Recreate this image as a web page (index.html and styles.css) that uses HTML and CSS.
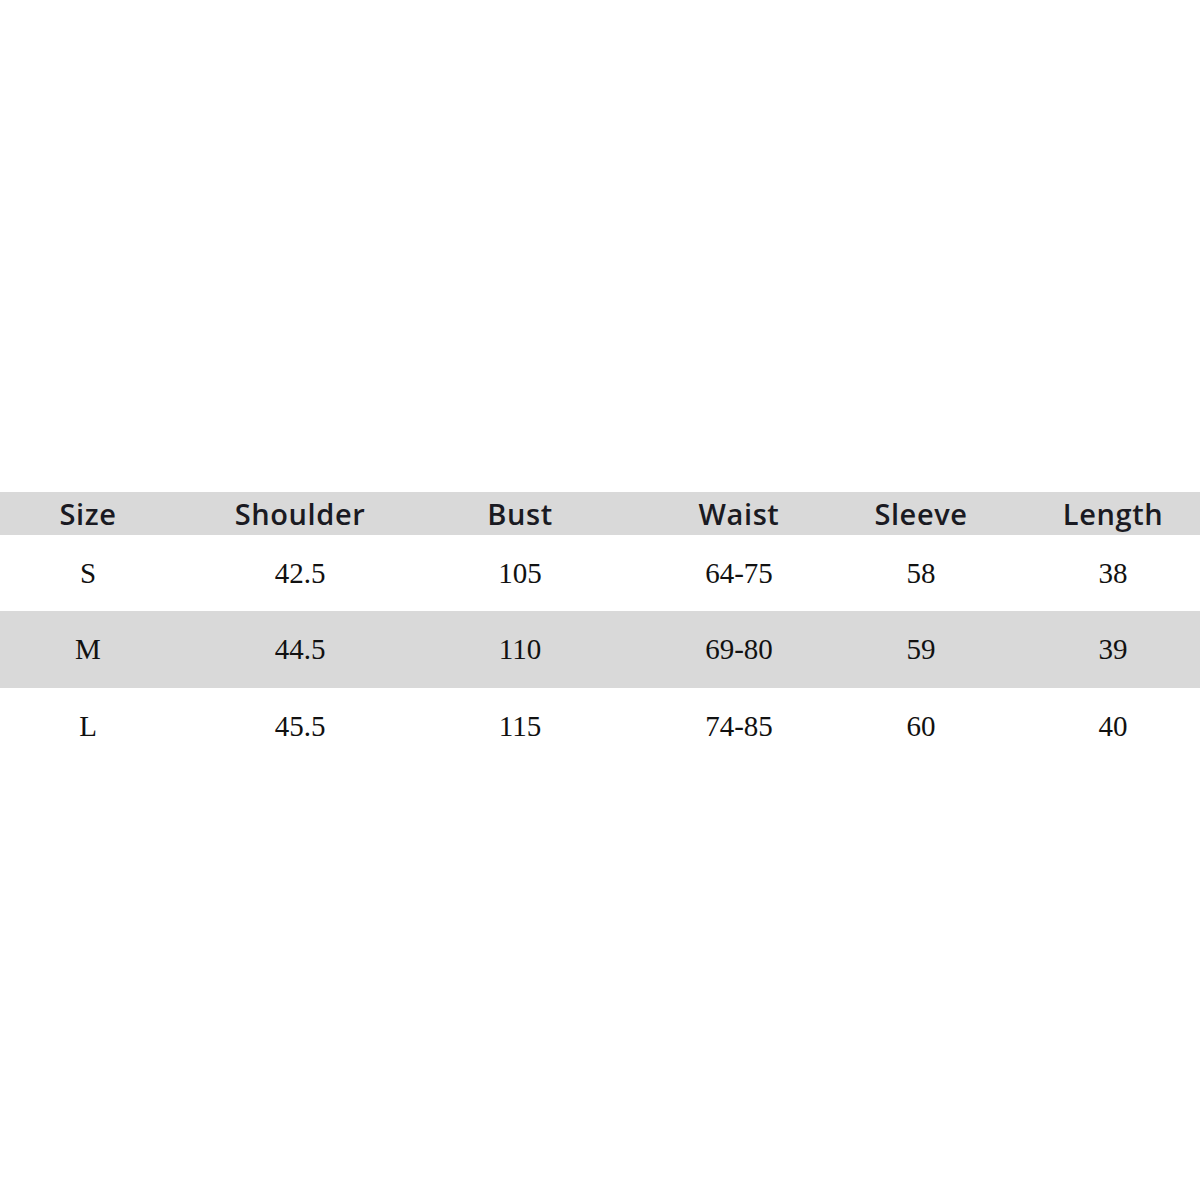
FILE: index.html
```html
<!DOCTYPE html>
<html>
<head>
<meta charset="utf-8">
<link rel="stylesheet" href="styles.css">
</head>
<body>
<div class="chart">
  <div class="row head">
    <div class="cell">Size</div><div class="cell">Shoulder</div><div class="cell">Bust</div><div class="cell">Waist</div><div class="cell">Sleeve</div><div class="cell last">Length</div>
  </div>
  <div class="row">
    <div class="cell">S</div><div class="cell">42.5</div><div class="cell">105</div><div class="cell">64-75</div><div class="cell">58</div><div class="cell last">38</div>
  </div>
  <div class="row shade">
    <div class="cell">M</div><div class="cell">44.5</div><div class="cell">110</div><div class="cell">69-80</div><div class="cell">59</div><div class="cell last">39</div>
  </div>
  <div class="row">
    <div class="cell">L</div><div class="cell">45.5</div><div class="cell">115</div><div class="cell">74-85</div><div class="cell">60</div><div class="cell last">40</div>
  </div>
</div>
</body>
</html>
```
FILE: styles.css
```css
html, body {
  margin: 0;
  padding: 0;
  background: #ffffff;
}
.chart {
  padding-top: 492px;
  font-family: "Liberation Serif", "Times New Roman", serif;
  color: #111111;
}
.row {
  display: grid;
  grid-template-columns: 176px 248px 192px 246px 118px 220px;
  height: 76px;
  align-items: center;
  font-size: 29px;
}
.row.head {
  height: 43px;
  background: #d9d9d9;
  font-family: "Open Sans", "Noto Sans", sans-serif;
  font-size: 29px;
  font-weight: 600;
  letter-spacing: 0.6px;
  color: #1a1a22;
}
.row.shade {
  height: 77px;
  background: #d9d9d9;
}
.cell {
  text-align: center;
  white-space: nowrap;
}
.cell.last {
  padding-left: 46px;
}
```
